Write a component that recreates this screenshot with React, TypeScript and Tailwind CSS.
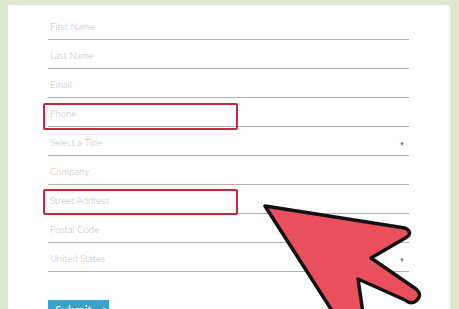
import React from 'react';

const fields = [
	{ label: 'First Name' },
	{ label: 'Last Name' },
	{ label: 'Email' },
	{ label: 'Phone' },
	{ label: 'Select a Title', select: true },
	{ label: 'Company' },
	{ label: 'Street Address' },
	{ label: 'Postal Code' },
	{ label: 'United States', select: true },
];

function Arrow() {
	return (
		<svg
			className="pointer-events-none absolute left-0 top-0"
			width="459"
			height="309"
			viewBox="0 0 459 309"
		>
			<path
				d="M265 206 L405 228 Q413 232 407 237 L371 258 L416 289 Q423 295 416 301 Q411 305 405 300 L358 279 L364 320 L338 320 Z"
				fill="#ea4f5d"
				stroke="#111"
				strokeWidth="3.5"
				strokeLinejoin="round"
			/>
		</svg>
	);
}

export default function App() {
	return (
		<div className="relative h-[309px] w-[459px] overflow-hidden bg-[#dde9cf] font-['Lato','Open_Sans',sans-serif]">
			<div className="ml-[8px] mt-[5px] h-[304px] w-[442px] bg-white">
				<div className="mx-[8px] h-px bg-[#f1f4fa]" />
				<div className="ml-[40px] mt-[5px] w-[361px]">
					{fields.map((field) => (
						<div
							key={field.label}
							className="flex h-[29px] items-center justify-between border-b border-[#b0b0b0] pl-[2px] pr-[4px] pt-[5px]"
						>
							<span className="text-[9.5px] font-light text-[#bcbcbc]">
								{field.label}
							</span>
							{field.select && (
								<span className="text-[6px] text-[#777]">▼</span>
							)}
						</div>
					))}
					<button className="mt-[28px] flex h-[22px] w-[61px] items-start gap-[10px] bg-[#3aa2c8] pl-[7px] pt-[1px] text-[12px] text-white">
						<span>Submit</span>
						<span>&gt;</span>
					</button>
				</div>
			</div>

			<div className="absolute left-[43px] top-[103px] h-[27px] w-[195px] rounded-[2px] border-2 border-[#c9283a]" />
			<div className="absolute left-[43px] top-[189px] h-[26px] w-[195px] rounded-[2px] border-2 border-[#c9283a]" />
			<Arrow />
		</div>
	);
}
